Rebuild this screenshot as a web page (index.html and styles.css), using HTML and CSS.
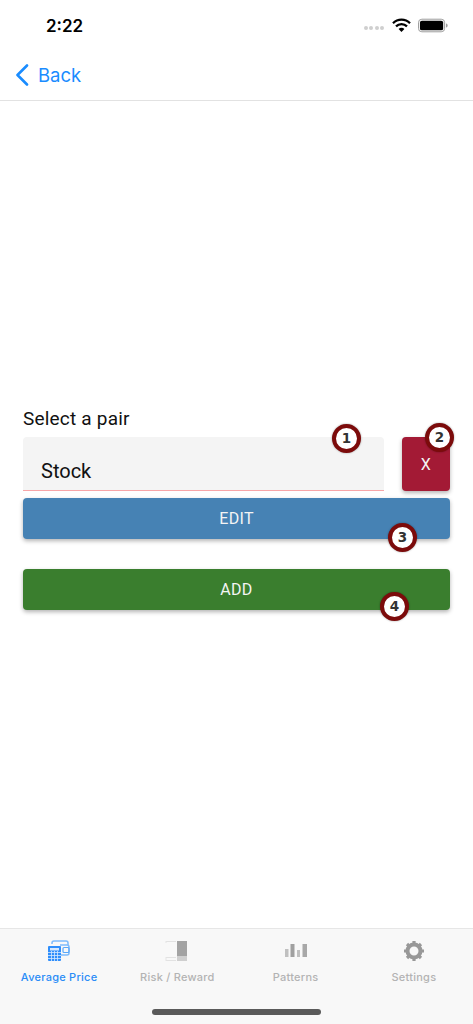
FILE: index.html
```html
<!DOCTYPE html>
<html lang="en">
<head>
<meta charset="utf-8">
<title>Select a pair</title>
<link rel="stylesheet" href="styles.css">
</head>
<body>
<div class="screen">
  <div class="status">
    <span class="time">2:22</span>
    <div class="status-icons">
      <div class="dots"><i></i><i></i><i></i><i></i></div>
      <svg class="wifi" width="19" height="15" viewBox="0 0 19 15"><path d="M1 5.2a12 12 0 0 1 17 0" fill="none" stroke="#000" stroke-width="2.3"/><path d="M4 8.4a7.8 7.8 0 0 1 11 0" fill="none" stroke="#000" stroke-width="2.3"/><path d="M9.5 14 6.6 11a4 4 0 0 1 5.8 0z" fill="#000"/></svg>
      <svg class="battery" width="30" height="15" viewBox="0 0 31 15"><rect x=".5" y="1" width="27" height="13" rx="3.5" fill="none" stroke="#999"/><rect x="2" y="2.500" width="24" height="10" rx="2" fill="#000"/><path d="M29 5.500c1.200.3 1.600 1.100 1.600 2s-.4 1.700-1.600 2z" fill="#999"/></svg>
    </div>
  </div>
  <nav class="nav">
    <svg class="chevron" width="14" height="22" viewBox="0 0 14 22"><path d="M12 1.500 2.500 11 12 20.500" fill="none" stroke="#1a8cff" stroke-width="2.600" stroke-linecap="round" stroke-linejoin="round"/></svg>
    <span class="back">Back</span>
  </nav>
  <main class="main">
    <div class="label">Select a pair</div>
    <div class="pair-row">
      <div class="field">Stock<span class="badge badge-1">1</span></div>
      <button class="btn btn-x">X<span class="badge badge-2">2</span></button>
    </div>
    <button class="btn btn-wide btn-edit">EDIT<span class="badge badge-3">3</span></button>
    <button class="btn btn-wide btn-add">ADD<span class="badge badge-4">4</span></button>
  </main>
  <footer class="tabs">
    <div class="tab tab-active">
      <svg width="24" height="22" viewBox="0 0 24 22"><path d="M5 4V3a2 2 0 0 1 2-2h12a2 2 0 0 1 2 2v2" fill="none" stroke="#7dbbfb" stroke-width="1.500"/><path d="M13 5h7a2 2 0 0 1 2 2v6a2 2 0 0 1-2 2h-6" fill="none" stroke="#7dbbfb" stroke-width="1.500"/><rect x="16" y="7.500" width="6" height="5" rx="1" fill="none" stroke="#5aa8fa" stroke-width="1.200"/><rect x="1" y="6" width="13" height="15" rx="1" fill="#2f8efb"/><rect x="3" y="8" width="9" height="2.500" fill="#d5e8fe"/><path d="M1 12.500h13M1 15.500h13M1 18.500h13M4.500 11v10M7.500 11v10M10.500 11v10" stroke="#d5e8fe" stroke-width=".8"/></svg>
      <span class="tab-label">Average Price</span>
    </div>
    <div class="tab">
      <svg width="24" height="22" viewBox="0 0 24 22"><path d="M1 1.500h10M1 17.500h10M1 20.500h10" stroke="#e2e2e2" stroke-width="1"/><path d="M1 1v2M1 17v4" stroke="#e4e4e4"/><rect x="12" y="1" width="10" height="15" fill="#a3a3a3"/><rect x="12" y="16" width="10" height="5" fill="#cfcfcf"/></svg>
      <span class="tab-label">Risk / Reward</span>
    </div>
    <div class="tab">
      <svg width="24" height="22" viewBox="0 0 24 22"><rect x="1" y="9" width="3.500" height="8" fill="#c0c0c0"/><rect x="6.500" y="4" width="4" height="13" fill="#a0a0a0"/><rect x="13" y="10" width="3" height="7" fill="#c0c0c0"/><rect x="18.500" y="4" width="4.500" height="13" fill="#a8a8a8"/></svg>
      <span class="tab-label">Patterns</span>
    </div>
    <div class="tab">
      <svg width="24" height="22" viewBox="0 0 24 22"><circle cx="12" cy="11" r="6.500" fill="none" stroke="#989898" stroke-width="4"/><path d="M12 1v20M2 11h20M5 4l14 14M19 4 5 18" stroke="#989898" stroke-width="3.200" stroke-dasharray="3 14 3 50"/></svg>
      <span class="tab-label">Settings</span>
    </div>
    <div class="home-bar"></div>
  </footer>
</div>
</body>
</html>
```
FILE: styles.css
```css
* { box-sizing: border-box; }
html, body { margin: 0; padding: 0; }
body { background: #fff; font-family: Roboto, "Liberation Sans", sans-serif; }
.screen { width: 473px; height: 1024px; display: flex; flex-direction: column; overflow: hidden; }
.status { height: 50px; flex: none; display: flex; align-items: center; justify-content: space-between; padding: 2px 25px 0 46px; }
.time { font-family: Inter, sans-serif; font-weight: 600; font-size: 17px; color: #000; }
.status-icons { display: flex; align-items: center; }
.dots { display: flex; gap: 1.500px; margin-right: 8px; margin-top: 4px; }
.dots i { width: 4px; height: 4px; border-radius: 50%; background: #cfcfcf; }
.wifi { margin-right: 7px; margin-top: -2px; }
.battery { margin-top: -1px; }
.nav { height: 51px; flex: none; display: flex; align-items: center; padding: 0 0 0 15px; border-bottom: 1px solid #e2e2e2; }
.chevron { margin-right: 9px; }
.back { font-family: Inter, sans-serif; font-size: 18.500px; color: #1a8cff; }
.main { flex: 1; padding: 307px 23px 0; display: flex; flex-direction: column; }
.label { font-size: 19px; line-height: 22px; height: 29px; letter-spacing: .2px; color: #111; }
.pair-row { display: flex; gap: 18px; }
.field { position: relative; flex: 1; height: 54px; background: #f4f4f4; border-radius: 4px 4px 0 0; border-bottom: 1px solid #f8a6a8; padding: 23px 18px 0; font-size: 20px; line-height: 22px; color: #111; }
.btn { position: relative; display: block; border: 0; border-radius: 4px; padding: 0; color: #f4f4f4; font-family: Roboto, sans-serif; font-size: 16px; letter-spacing: .3px; box-shadow: 0 2px 4px rgba(0,0,0,.3); }
.btn-x { width: 48px; height: 54px; background: #a31a35; font-size: 16px; }
.btn-wide { height: 41px; width: 427px; }
.btn-edit { background: #4682b4; margin-top: 7px; }
.btn-add { background: #3a7e2e; margin-top: 30px; }
.badge { position: absolute; width: 29px; height: 29px; border-radius: 50%; background: #fff; border: 4px solid #7c0b0b; color: #333; font-family: "DejaVu Sans", sans-serif; font-weight: 700; font-size: 13.500px; line-height: 21px; text-align: center; letter-spacing: 0; box-shadow: 0 0 2px rgba(0,0,0,.4); }
.badge-1 { right: 23px; top: -13px; }
.badge-2 { right: -4px; top: -14px; }
.badge-3 { left: 365px; top: 25px; }
.badge-4 { left: 357px; top: 23px; }
.tabs { position: relative; height: 96px; flex: none; background: #f8f8f8; border-top: 1px solid #e6e6e6; display: grid; grid-template-columns: repeat(4, 1fr); padding: 11px 0 0; }
.tab { display: flex; flex-direction: column; align-items: center; gap: 7px; height: 50px; }
.tab-label { font-family: Inter, sans-serif; font-weight: 500; font-size: 11px; line-height: 16px; letter-spacing: .25px; color: #b3b3b3; }
.tab-active .tab-label { color: #2a8cf7; font-weight: 500; }
.home-bar { position: absolute; left: 152px; top: 80px; width: 169px; height: 6px; border-radius: 3px; background: #5a5a5a; }
```
